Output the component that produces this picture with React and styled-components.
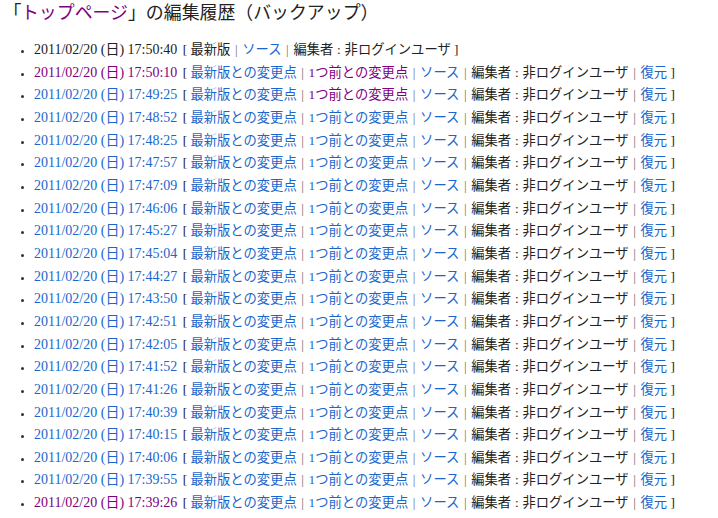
import React from 'react'
import styled, { createGlobalStyle } from 'styled-components'

const GlobalStyle = createGlobalStyle`
    body {
        margin : 0;
        background : #ffffff;
        color : #222222;
        font-family : "Liberation Serif", "Noto Sans CJK JP", serif;
    }
`

const Page = styled.div`
    padding : 0 0 0 12px;
`
const Title = styled.h2`
    margin : 0;
    padding : 2px 0 0 0;
    font-size : 17.9px;
    font-weight : normal;
    line-height : 22px;
    color : #222222;
`
const OpenBracket = styled.span`
    font-feature-settings : "palt";
`
const List = styled.ul`
    margin : 15px 0 0 0;
    padding : 0 0 0 22px;
    font-size : 13.3px;
    line-height : 22.65px;
    list-style : disc;
`
const Item = styled.li`
    white-space : nowrap;
    &::marker {
        color : #333333;
        font-size : 11px;
    }
`
const Link = styled.a`
    color : ${props => props.visited ? '#800080' : '#1b66cc'};
    text-decoration : none;
`
const Stamp = styled.span`
    font-size : 14px;
    margin-right : 2px;
`
const Sep = styled.span`
    color : #707070;
    padding : 0 1.3px;
`
const Editor = styled.span`
    word-spacing : 0.5px;
`

const rows = [
    ['17:50:10', true, true],
    ['17:49:25', false, true],
    ['17:48:52'], ['17:48:25'], ['17:47:57'], ['17:47:09'], ['17:46:06'],
    ['17:45:27'], ['17:45:04'], ['17:44:27'], ['17:43:50'], ['17:42:51'],
    ['17:42:05'], ['17:41:52'], ['17:41:26'], ['17:40:39'], ['17:40:15'],
    ['17:40:06'], ['17:39:55'],
    ['17:39:26', true, false],
]

function Bar(){
    return <Sep> | </Sep>
}

function Row(props){
    return (
        <Item>
            <Link visited={props.dateVisited}><Stamp>2011/02/20 (日) {props.time}</Stamp></Link>
            {' [ '}
            <Link>最新版との変更点</Link><Bar />
            <Link visited={props.prevVisited}>1つ前との変更点</Link><Bar />
            <Link>ソース</Link><Bar />
            <Editor>編集者 : 非ログインユーザ</Editor><Bar />
            <Link>復元</Link>
            {' ]'}
        </Item>
    )
}

export default function App(){
    return (
        <Page>
            <GlobalStyle />
            <Title><OpenBracket>「</OpenBracket><Link visited>トップページ</Link>」の編集履歴（バックアップ）</Title>
            <List>
                <Item>
                    <Stamp>2011/02/20 (日) 17:50:40</Stamp>
                    {' [ 最新版'}<Bar />
                    <Link>ソース</Link><Bar />
                    <Editor>編集者 : 非ログインユーザ</Editor>
                    {' ]'}
                </Item>
                {rows.map(r => (
                    <Row key={r[0]} time={r[0]} dateVisited={r[1]} prevVisited={r[2]} />
                ))}
            </List>
        </Page>
    )
}
